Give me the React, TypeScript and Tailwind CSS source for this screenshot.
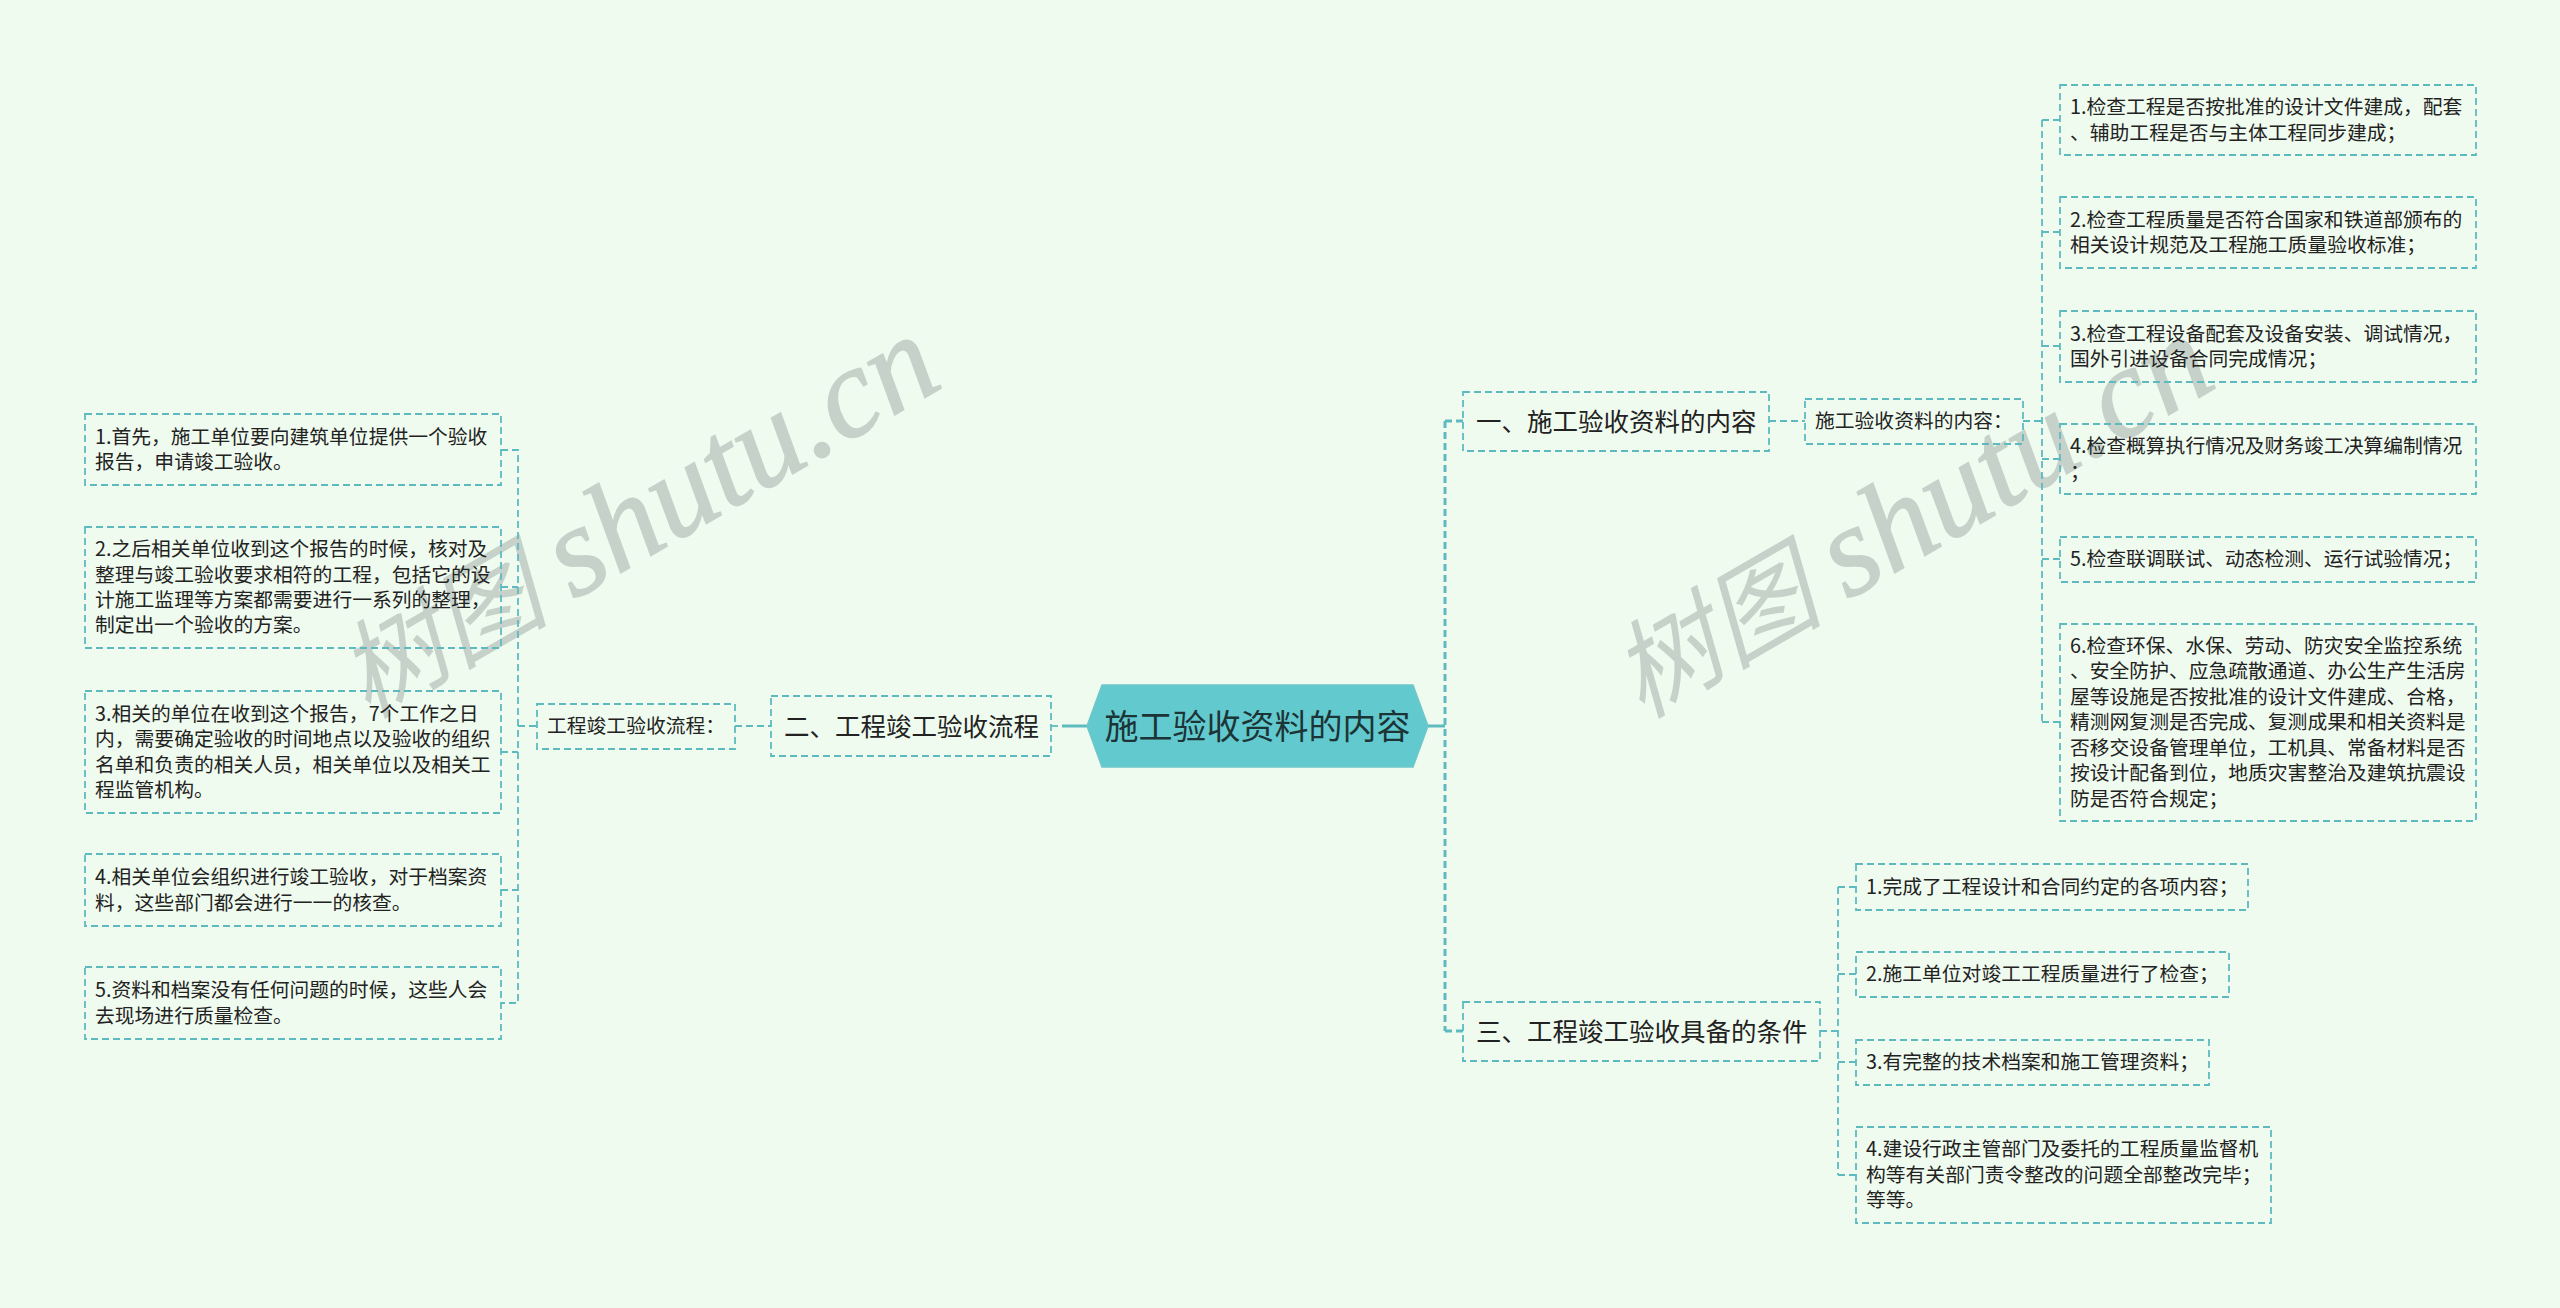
const C = "#5dbbc0";
const S = "text-[19.8px] leading-[25.4px] pl-[10px] pb-[3px]";
const B = "text-[25.5px] leading-[34px] pl-[13px] pb-[3px]";

type N = { c: string; x: number; y: number; w: number; h: number; t: string; lines: string[] };

const nodes: N[] = [
  { c: "left-[85px] top-[414px] w-[416px] h-[71px]", x: 85, y: 414, w: 416, h: 71, t: S, lines: ["1.首先，施工单位要向建筑单位提供一个验收", "报告，申请竣工验收。"] },
  { c: "left-[85px] top-[527px] w-[416px] h-[121px]", x: 85, y: 527, w: 416, h: 121, t: S, lines: ["2.之后相关单位收到这个报告的时候，核对及", "整理与竣工验收要求相符的工程，包括它的设", "计施工监理等方案都需要进行一系列的整理，", "制定出一个验收的方案。"] },
  { c: "left-[85px] top-[691px] w-[416px] h-[122px]", x: 85, y: 691, w: 416, h: 122, t: S, lines: ["3.相关的单位在收到这个报告，7个工作之日", "内，需要确定验收的时间地点以及验收的组织", "名单和负责的相关人员，相关单位以及相关工", "程监管机构。"] },
  { c: "left-[85px] top-[854px] w-[416px] h-[72px]", x: 85, y: 854, w: 416, h: 72, t: S, lines: ["4.相关单位会组织进行竣工验收，对于档案资", "料，这些部门都会进行一一的核查。"] },
  { c: "left-[85px] top-[967px] w-[416px] h-[72px]", x: 85, y: 967, w: 416, h: 72, t: S, lines: ["5.资料和档案没有任何问题的时候，这些人会", "去现场进行质量检查。"] },
  { c: "left-[537px] top-[704px] w-[198px] h-[45px]", x: 537, y: 704, w: 198, h: 45, t: S, lines: ["工程竣工验收流程："] },
  { c: "left-[771px] top-[696px] w-[280px] h-[60px]", x: 771, y: 696, w: 280, h: 60, t: B, lines: ["二、工程竣工验收流程"] },
  { c: "left-[1463px] top-[392px] w-[306px] h-[59px]", x: 1463, y: 392, w: 306, h: 59, t: B, lines: ["一、施工验收资料的内容"] },
  { c: "left-[1463px] top-[1002px] w-[357px] h-[59px]", x: 1463, y: 1002, w: 357, h: 59, t: B, lines: ["三、工程竣工验收具备的条件"] },
  { c: "left-[1805px] top-[399px] w-[218px] h-[45px]", x: 1805, y: 399, w: 218, h: 45, t: S, lines: ["施工验收资料的内容："] },
  { c: "left-[2060px] top-[85px] w-[416px] h-[70px]", x: 2060, y: 85, w: 416, h: 70, t: S, lines: ["1.检查工程是否按批准的设计文件建成，配套", "、辅助工程是否与主体工程同步建成；"] },
  { c: "left-[2060px] top-[197px] w-[416px] h-[71px]", x: 2060, y: 197, w: 416, h: 71, t: S, lines: ["2.检查工程质量是否符合国家和铁道部颁布的", "相关设计规范及工程施工质量验收标准；"] },
  { c: "left-[2060px] top-[311px] w-[416px] h-[71px]", x: 2060, y: 311, w: 416, h: 71, t: S, lines: ["3.检查工程设备配套及设备安装、调试情况，", "国外引进设备合同完成情况；"] },
  { c: "left-[2060px] top-[424px] w-[416px] h-[70px]", x: 2060, y: 424, w: 416, h: 70, t: S, lines: ["4.检查概算执行情况及财务竣工决算编制情况", "；"] },
  { c: "left-[2060px] top-[537px] w-[416px] h-[45px]", x: 2060, y: 537, w: 416, h: 45, t: S, lines: ["5.检查联调联试、动态检测、运行试验情况；"] },
  { c: "left-[2060px] top-[624px] w-[416px] h-[197px]", x: 2060, y: 624, w: 416, h: 197, t: S, lines: ["6.检查环保、水保、劳动、防灾安全监控系统", "、安全防护、应急疏散通道、办公生产生活房", "屋等设施是否按批准的设计文件建成、合格，", "精测网复测是否完成、复测成果和相关资料是", "否移交设备管理单位，工机具、常备材料是否", "按设计配备到位，地质灾害整治及建筑抗震设", "防是否符合规定；"] },
  { c: "left-[1856px] top-[864px] w-[392px] h-[46px]", x: 1856, y: 864, w: 392, h: 46, t: S, lines: ["1.完成了工程设计和合同约定的各项内容；"] },
  { c: "left-[1856px] top-[952px] w-[373px] h-[45px]", x: 1856, y: 952, w: 373, h: 45, t: S, lines: ["2.施工单位对竣工工程质量进行了检查；"] },
  { c: "left-[1856px] top-[1040px] w-[353px] h-[45px]", x: 1856, y: 1040, w: 353, h: 45, t: S, lines: ["3.有完整的技术档案和施工管理资料；"] },
  { c: "left-[1856px] top-[1127px] w-[415px] h-[96px]", x: 1856, y: 1127, w: 415, h: 96, t: S, lines: ["4.建设行政主管部门及委托的工程质量监督机", "构等有关部门责令整改的问题全部整改完毕；", "等等。"] },
];

const thin = [
  "M501 450H518V1003H501", "M501 587H518", "M501 752H518", "M501 890H518",
  "M518 726H537", "M735 726H771", "M1051 726H1062",
  "M1769 421H1805", "M2023 421H2042", "M2042 120V722", "M2042 120H2060", "M2042 232H2060", "M2042 346H2060", "M2042 459H2060", "M2042 559H2060", "M2042 722H2060",
  "M1820 1031H1838", "M1838 887V1175", "M1838 887H1856", "M1838 974H1856", "M1838 1062H1856", "M1838 1175H1856",
];

function Mark({ c }: { c: string }) {
  return (
    <div className={`absolute ${c} origin-left -rotate-[30deg] whitespace-nowrap leading-none italic text-[#c6d1ca] font-['Liberation_Serif','Noto_Sans_CJK_SC',serif]`}>
      <span className="text-[106px]">树图</span>
      <span className="text-[128px] ml-[26px] [-webkit-text-stroke:1.5px_#c6d1ca]">shutu.cn</span>
    </div>
  );
}

export default function App() {
  return (
    <div className="relative w-[2560px] h-[1308px] overflow-hidden bg-[#f0fbef] text-[#222] font-['Noto_Sans_CJK_SC','Noto_Sans',sans-serif]">
      <Mark c="left-[346px] top-[618px]" />
      <Mark c="left-[1620px] top-[618px]" />
      <svg className="absolute inset-0" width="2560" height="1308" fill="none">
        {thin.map((d) => (
          <path key={d} d={d} stroke={C} strokeWidth="1.8" strokeDasharray="7 4" />
        ))}
        <path d="M1445 421V1031" stroke={C} strokeWidth="3" strokeDasharray="7 4" />
        <path d="M1445 421H1463M1445 1031H1463" stroke={C} strokeWidth="3" strokeDasharray="7 4" />
        <path d="M1062 726H1087M1428 726H1445" stroke={C} strokeWidth="3" />
        {nodes.map((n) => (
          <rect key={n.c} x={n.x} y={n.y} width={n.w} height={n.h} stroke={C} strokeWidth="1.8" strokeDasharray="7 4" />
        ))}
        <polygon points="1102,685 1413,685 1428,726 1413,767 1102,767 1087,726" fill="#62c9ce" stroke="#6fc6cb" strokeWidth="1.5" />
      </svg>
      {nodes.map((n) => (
        <div key={n.c} className={`absolute ${n.c} ${n.t} flex flex-col justify-center whitespace-nowrap`}>
          {n.lines.map((l) => (
            <div key={l}>{l}</div>
          ))}
        </div>
      ))}
      <div className="absolute left-[1087px] top-[685px] w-[341px] h-[82px] pb-[4px] flex items-center justify-center text-[34px] text-[#1c3436]">
        施工验收资料的内容
      </div>
    </div>
  );
}
